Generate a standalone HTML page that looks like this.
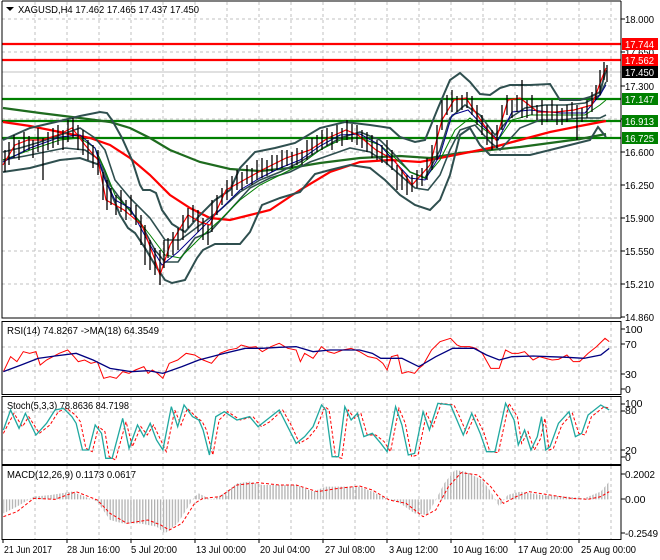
<!DOCTYPE html>
<html><head><meta charset="utf-8"><style>
html,body{margin:0;padding:0;background:#fff;width:660px;height:560px;overflow:hidden}
svg{position:absolute;left:0;top:0}
text{font-family:"Liberation Sans",sans-serif;font-size:10.5px;fill:#000}
</style></head><body>
<svg width="660" height="560" viewBox="0 0 660 560">
<rect width="660" height="560" fill="#fff"/>
<g stroke="#c0c0c0" stroke-dasharray="3,3" stroke-width="1">
<path d="M35 2V318M67 2V318M99 2V318M131 2V318M163 2V318M195 2V318M227 2V318M259 2V318M291 2V318M323 2V318M355 2V318M387 2V318M419 2V318M451 2V318M483 2V318M515 2V318M547 2V318M579 2V318M611 2V318"/>
<path d="M2 19H621M2 52H621M2 86H621M2 119H621M2 152H621M2 185H621M2 218H621M2 251H621M2 284H621"/>
<path d="M35 322V394M67 322V394M99 322V394M131 322V394M163 322V394M195 322V394M227 322V394M259 322V394M291 322V394M323 322V394M355 322V394M387 322V394M419 322V394M451 322V394M483 322V394M515 322V394M547 322V394M579 322V394M611 322V394"/>
<path d="M2 347H621M2 371H621"/>
<path d="M35 397V464M67 397V464M99 397V464M131 397V464M163 397V464M195 397V464M227 397V464M259 397V464M291 397V464M323 397V464M355 397V464M387 397V464M419 397V464M451 397V464M483 397V464M515 397V464M547 397V464M579 397V464M611 397V464"/>
<path d="M2 412H621M2 450H621"/>
<path d="M35 466V539M67 466V539M99 466V539M131 466V539M163 466V539M195 466V539M227 466V539M259 466V539M291 466V539M323 466V539M355 466V539M387 466V539M419 466V539M451 466V539M483 466V539M515 466V539M547 466V539M579 466V539M611 466V539"/>
</g>
<g stroke-width="2.2">
<path d="M2 44H621M2 60H621" stroke="#ff0000"/>
<path d="M2 99H621M2 121H621M2 138H621" stroke="#008000"/>
</g>
<path d="M2 72H621" stroke="#c0c0c0" stroke-width="1"/>
<polyline fill="none" stroke="#1e6b1e" stroke-width="2.2" points="3,108 40,113 80,118 110,122 130,128 150,138 170,150 200,162 230,169 260,171 290,168 320,163 360,158 400,156 430,158 460,153 490,150 520,147 550,143 580,139 606,134"/>
<polyline fill="none" stroke="#ff0000" stroke-width="2.2" points="3,122 30,126 60,132 90,138 110,145 130,158 150,175 170,195 190,208 210,218 230,220 250,215 270,210 300,190 330,172 360,162 390,160 420,162 440,158 470,152 490,148 520,140 550,132 580,126 606,121"/>
<polyline fill="none" stroke="#2f4f4f" stroke-width="2" points="3,140 30,128 60,121 80,116 100,112 107,113 112,120 122,138 132,160 140,185 143,190 150,190 156,193 162,210 172,224 185,232 200,215 215,200 230,190 240,168 255,152 275,148 295,143 320,128 345,122 370,125 390,128 400,137 415,142 425,140 438,108 450,80 460,73 470,82 480,94 490,95 500,88 510,85 530,85 550,84 560,100 580,100 590,97 600,92 606,70"/>
<polyline fill="none" stroke="#2f4f4f" stroke-width="2" points="3,172 30,168 60,160 80,158 100,165 110,190 120,215 128,228 135,233 145,248 155,265 165,280 172,283 185,280 197,258 203,250 215,244 240,244 250,232 262,205 280,198 300,192 315,174 330,170 350,165 370,168 385,180 400,195 415,205 430,210 440,200 450,175 460,135 470,128 480,145 490,155 500,155 515,155 530,155 550,150 570,145 590,140 598,127 606,137"/>
<polyline fill="none" stroke="#2f4f4f" stroke-width="1.6" points="3,152 20,148 40,142 60,135 80,128 95,138 105,150 115,180 130,198 150,218 165,240 180,240 200,225 220,210 240,192 260,180 280,172 300,162 320,150 340,138 360,132 380,140 395,155 410,172 425,178 440,150 450,118 465,105 480,115 495,135 510,118 525,108 545,105 565,105 585,103 600,95 606,82"/>
<polyline fill="none" stroke="#2f4f4f" stroke-width="1.6" points="3,160 25,156 45,152 65,148 85,150 100,160 110,185 125,205 140,222 155,250 165,262 178,262 195,238 210,232 230,210 250,188 270,178 290,172 310,162 330,155 350,148 370,152 385,162 400,175 415,188 428,190 440,175 450,150 460,130 475,125 490,142 500,150 520,128 540,120 560,120 580,118 600,118 606,115"/>
<polyline fill="none" stroke="#008000" stroke-width="1" points="3,160 30,150 60,140 80,138 95,148 105,170 115,195 130,210 150,235 165,255 180,258 200,238 220,220 240,200 260,185 280,175 300,165 320,150 340,140 360,138 380,145 395,158 410,172 425,178 440,160 455,130 470,118 485,130 498,140 512,120 530,115 560,115 585,115 600,105 606,100"/>
<polyline fill="none" stroke="#00008b" stroke-width="1" points="3,162 30,148 60,137 80,135 95,148 105,180 115,200 130,208 150,245 162,265 178,252 200,230 220,210 240,190 260,178 280,168 300,160 320,146 340,135 360,134 380,145 395,162 410,178 425,180 440,155 452,115 468,110 485,128 498,140 512,112 530,110 560,113 585,113 600,95 606,85"/>
<polyline fill="none" stroke="#ff0000" stroke-width="1.2" points="3,165 15,145 28,140 42,140 58,135 72,128 85,145 98,160 106,200 124,210 142,225 155,260 160,275 170,245 188,215 200,222 210,225 226,190 244,180 262,170 286,158 310,150 328,138 346,130 358,135 376,150 394,160 412,185 430,165 442,120 454,100 466,98 484,125 496,140 508,100 520,98 538,112 556,112 574,110 592,105 602,78 606,68"/>
<g stroke="#000" stroke-width="1.3">
<path d="M5 150V172M9 142V165M14 135V158M19 140V160M24 132V152M29 136V150M33 140V158M38 128V152M43 138V180M48 132V150M53 128V148M58 125V145M63 130V150M68 120V142M73 118V138M78 125V150M83 130V155M88 140V160M93 145V168M98 150V175M103 172V200M107 180V210M111 188V205M116 195V215M121 190V212M126 200V220M131 195V215M136 205V225M141 215V245M145 225V265M150 240V270M155 248V275M160 250V285M164 240V268M168 238V258M173 232V255M178 228V250M183 215V240M188 208V228M193 205V222M198 210V232M203 218V240M208 225V245M212 200V232M217 195V215M222 188V205M227 180V200M232 176V196M237 170V190M242 172V190M247 165V184M252 168V185M257 160V180M262 158V178M267 160V176M272 155V172M277 155V170M282 150V168M287 150V166M292 152V168M297 148V165M302 150V165M307 140V160M312 138V155M317 135V152M322 130V150M327 128V146M332 132V150M337 125V143M342 128V146M347 120V140M352 124V142M357 125V145M362 130V148M367 132V152M372 135V158M377 140V160M382 145V163M387 140V165M392 150V170M397 165V190M402 170V190M407 175V195M412 175V192M417 170V188M422 168V186M427 158V180M432 145V170M437 125V160M442 100V130M447 95V115M452 90V112M457 96V112M462 95V110M467 92V108M472 96V115M477 105V125M482 115V135M487 125V145M492 130V150M497 125V148M502 105V130M507 95V115M512 100V118M517 95V112M522 80V118M527 100V118M532 95V115M537 105V120M542 100V125M547 105V122M552 100V120M557 105V125M562 108V125M567 105V122M572 102V118M577 105V140M582 108V122M587 100V118M592 92V112M596 85V100M600 70V95M604 62V80M607 65V82"/>
</g>
<path d="M2 1V318H621M621 1V318M2 1H621" fill="none" stroke="#000"/>
<g stroke="#000"><path d="M621 19h4M621 52h4M621 86h4M621 119h4M621 152h4M621 185h4M621 218h4M621 251h4M621 284h4M621 317h4"/></g>
<g>
<text x="625" y="23" textLength="29" lengthAdjust="spacingAndGlyphs">18.000</text><text x="625" y="56" textLength="29" lengthAdjust="spacingAndGlyphs">17.650</text><text x="625" y="90" textLength="29" lengthAdjust="spacingAndGlyphs">17.300</text><text x="625" y="156" textLength="29" lengthAdjust="spacingAndGlyphs">16.600</text><text x="625" y="189" textLength="29" lengthAdjust="spacingAndGlyphs">16.250</text><text x="625" y="222" textLength="29" lengthAdjust="spacingAndGlyphs">15.900</text><text x="625" y="255" textLength="29" lengthAdjust="spacingAndGlyphs">15.550</text><text x="625" y="288" textLength="29" lengthAdjust="spacingAndGlyphs">15.210</text><text x="625" y="321" textLength="29" lengthAdjust="spacingAndGlyphs">14.860</text>
</g>
<rect x="622" y="38" width="36" height="12" fill="#ff0000"/><text x="625" y="48" textLength="29" lengthAdjust="spacingAndGlyphs" style="fill:#fff">17.744</text>
<rect x="622" y="54" width="36" height="12" fill="#ff0000"/><text x="625" y="64" textLength="29" lengthAdjust="spacingAndGlyphs" style="fill:#fff">17.562</text>
<rect x="622" y="66" width="36" height="12" fill="#000"/><text x="625" y="76" textLength="29" lengthAdjust="spacingAndGlyphs" style="fill:#fff">17.450</text>
<rect x="622" y="93" width="36" height="12" fill="#008000"/><text x="625" y="103" textLength="29" lengthAdjust="spacingAndGlyphs" style="fill:#fff">17.147</text>
<rect x="622" y="115" width="36" height="12" fill="#008000"/><text x="625" y="125" textLength="29" lengthAdjust="spacingAndGlyphs" style="fill:#fff">16.913</text>
<rect x="622" y="132" width="36" height="12" fill="#008000"/><text x="625" y="142" textLength="29" lengthAdjust="spacingAndGlyphs" style="fill:#fff">16.725</text>
<path d="M6 7l4 4 4-4z" fill="#000"/>
<text x="18" y="13" textLength="181" lengthAdjust="spacingAndGlyphs">XAGUSD,H4  17.462 17.465 17.437 17.450</text>
<g fill="none" stroke="#000">
<rect x="2" y="321.5" width="619" height="73"/>
<rect x="2" y="396.5" width="619" height="68"/>
<rect x="2" y="465.5" width="619" height="74"/>
<path d="M621 329h4M621 344h4M621 374h4M621 389h4M621 404h4M621 411h4M621 450h4M621 457h4M621 474h4M621 499h4M621 533h4"/>
</g>
<text x="625" y="333">100</text><text x="625" y="348">70</text><text x="625" y="378">30</text><text x="625" y="393">0</text>
<text x="625" y="407">100</text><text x="625" y="414">80</text><text x="625" y="454">20</text><text x="625" y="461">0</text>
<text x="625" y="478" textLength="30" lengthAdjust="spacingAndGlyphs">0.2002</text><text x="625" y="503">0.00</text><text x="625" y="537" textLength="33" lengthAdjust="spacingAndGlyphs">-0.2549</text>
<text x="7" y="334" textLength="152" lengthAdjust="spacingAndGlyphs">RSI(14) 74.8267  -&gt;MA(18) 64.3549</text>
<text x="7" y="409" textLength="122" lengthAdjust="spacingAndGlyphs">Stoch(5,3,3) 78.8636 84.7198</text>
<text x="7" y="478" textLength="129" lengthAdjust="spacingAndGlyphs">MACD(12,26,9) 0.1173 0.0617</text>
</svg>
<svg width="660" height="250" viewBox="0 0 1560 750" preserveAspectRatio="none" style="top:310px">
<defs><pattern id="hs2" width="7" height="20" patternUnits="userSpaceOnUse"><rect width="3" height="20" fill="#b0b0b0"/></pattern></defs>
<polyline fill="none" stroke="#ff0000" stroke-width="1" vector-effect="non-scaling-stroke" points="8,185 25,140 40,155 55,125 70,130 85,125 95,165 110,150 125,140 140,130 160,120 175,140 185,155 200,150 215,160 230,155 245,205 260,200 275,205 290,185 305,190 320,180 340,170 350,190 360,180 372,190 385,205 400,160 420,150 440,130 460,135 480,150 500,160 520,130 540,120 560,115 570,105 590,112 605,110 620,125 640,110 660,100 680,115 700,120 710,155 720,130 740,145 760,110 775,125 790,130 810,120 830,115 850,125 870,140 890,145 905,160 915,180 925,140 940,135 950,190 965,185 980,190 990,175 1000,165 1020,120 1040,95 1065,85 1080,105 1090,110 1110,110 1125,115 1140,130 1160,175 1180,175 1195,120 1210,130 1225,130 1240,125 1260,150 1275,140 1290,145 1305,150 1320,148 1340,135 1355,155 1370,155 1390,130 1410,110 1430,85 1440,95"/>
<polyline fill="none" stroke="#000080" stroke-width="1.3" vector-effect="non-scaling-stroke" points="8,185 50,165 90,145 130,138 180,130 220,150 260,175 310,185 350,182 385,190 430,170 470,150 530,130 580,115 620,115 660,112 700,110 740,125 780,120 850,120 880,130 900,145 950,145 990,170 1030,140 1070,115 1120,115 1150,135 1180,150 1210,140 1260,138 1300,140 1340,142 1380,145 1420,135 1440,115"/>
<polyline fill="none" stroke="#ff0000" stroke-width="1" stroke-dasharray="3,2" vector-effect="non-scaling-stroke" points="8,370 33,310 53,350 68,320 93,370 118,345 138,305 158,295 178,315 190,335 203,415 218,425 233,350 248,365 258,440 273,450 298,335 313,410 333,350 348,375 363,345 378,385 393,425 413,300 428,345 443,295 463,320 478,335 488,360 503,435 518,330 538,305 568,330 598,320 618,350 638,335 668,300 688,345 708,400 728,385 748,355 768,290 778,300 793,440 808,445 823,300 838,325 853,310 868,375 888,375 908,395 923,425 943,295 958,340 973,440 988,435 1008,310 1023,350 1043,280 1073,285 1088,325 1103,370 1123,315 1143,365 1158,425 1178,428 1203,280 1223,320 1233,400 1248,365 1263,420 1278,385 1288,325 1298,420 1308,415 1328,345 1353,310 1368,370 1383,375 1398,320 1428,290 1440,295"/>
<polyline fill="none" stroke="#20a8a0" stroke-width="1.3" vector-effect="non-scaling-stroke" points="8,360 25,300 45,355 60,310 85,375 110,340 130,300 150,295 170,320 180,340 195,420 210,420 225,345 240,370 250,445 265,445 290,325 305,415 325,345 340,380 355,340 370,390 385,420 405,290 420,350 435,285 455,320 470,330 480,360 495,435 510,320 530,305 560,330 590,320 610,350 630,330 660,300 680,350 700,400 720,380 740,350 760,285 770,300 785,440 800,440 815,290 830,330 845,310 860,380 880,370 900,400 915,425 935,290 950,345 965,435 980,430 1000,305 1015,360 1035,280 1065,285 1080,330 1095,375 1115,310 1135,370 1150,425 1170,425 1195,280 1215,330 1225,405 1240,360 1255,420 1270,380 1280,320 1290,420 1300,410 1320,340 1345,305 1360,380 1375,370 1390,315 1420,285 1440,300"/>
<polygon fill="url(#hs2)" points="8,568 8,610 40,590 80,560 120,555 170,545 200,560 230,575 260,630 290,640 330,640 370,650 390,670 420,640 460,560 470,550 500,570 530,550 560,520 590,515 620,525 700,525 740,545 770,530 850,530 880,545 920,570 940,575 980,610 1010,615 1030,570 1050,520 1075,480 1100,485 1140,510 1160,545 1180,590 1200,555 1230,545 1280,555 1340,560 1380,565 1420,545 1440,515 1440,568"/>
<polyline fill="none" stroke="#ff0000" stroke-width="1" stroke-dasharray="3,2" vector-effect="non-scaling-stroke" points="8,620 40,605 80,565 130,568 180,545 230,570 260,610 300,640 350,630 380,645 400,660 430,640 460,580 480,565 520,560 560,525 610,518 660,525 700,525 750,545 800,535 850,528 880,540 920,570 960,580 1000,620 1030,600 1060,530 1090,488 1130,495 1160,530 1190,580 1220,560 1250,545 1300,555 1350,565 1390,568 1420,560 1440,545"/>
</svg>
<svg width="660" height="560" viewBox="0 0 660 560">
<g stroke="#000"><path d="M3 539v4M67 539v4M131 539v4M195 539v4M259 539v4M323 539v4M387 539v4M451 539v4M515 539v4M579 539v4"/></g>
<text x="4" y="553" textLength="48" lengthAdjust="spacingAndGlyphs">21 Jun 2017</text><text x="67" y="553" textLength="53" lengthAdjust="spacingAndGlyphs">28 Jun 16:00</text><text x="131" y="553" textLength="46" lengthAdjust="spacingAndGlyphs">5 Jul 20:00</text><text x="196" y="553" textLength="50" lengthAdjust="spacingAndGlyphs">13 Jul 00:00</text><text x="260" y="553" textLength="50" lengthAdjust="spacingAndGlyphs">20 Jul 04:00</text><text x="325" y="553" textLength="50" lengthAdjust="spacingAndGlyphs">27 Jul 08:00</text><text x="389" y="553" textLength="49" lengthAdjust="spacingAndGlyphs">3 Aug 12:00</text><text x="453" y="553" textLength="55" lengthAdjust="spacingAndGlyphs">10 Aug 16:00</text><text x="518" y="553" textLength="55" lengthAdjust="spacingAndGlyphs">17 Aug 20:00</text><text x="581" y="553" textLength="55" lengthAdjust="spacingAndGlyphs">25 Aug 00:00</text>
</svg>
</body></html>
